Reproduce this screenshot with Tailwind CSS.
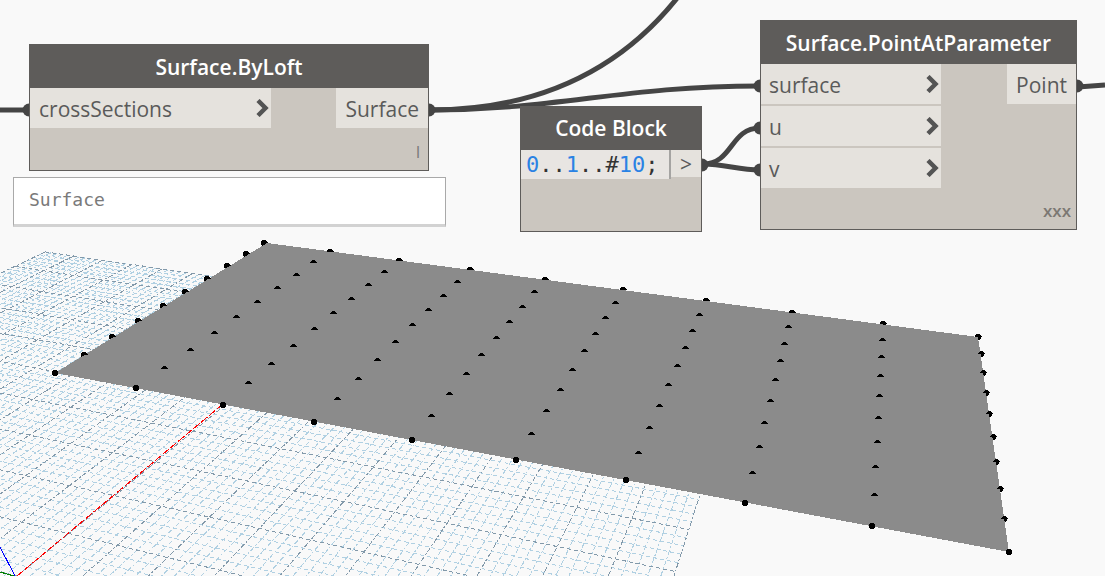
<!DOCTYPE html>
<html lang="en">
<head>
  <meta charset="UTF-8">
  <meta name="viewport" content="width=device-width, initial-scale=1.0" />
  <title>Surface.PointAtParameter</title>
  <script src="https://cdn.jsdelivr.net/npm/@tailwindcss/browser@4"></script>
</head>
<body class="relative min-h-screen overflow-hidden bg-[#f9f9f9] font-['Open_Sans',sans-serif] text-[#5a5a5a]">
  <!-- 3D preview -->
  <svg class="absolute inset-0 h-full w-full" aria-hidden="true">
    <g id="grid" fill="none" stroke-width="1" shape-rendering="crispEdges"></g>
    <g fill="none" stroke-width="1" shape-rendering="crispEdges">
      <path d="M17 576L223 404" stroke="#ff0000" stroke-dasharray="8 2" />
      <path d="M0 547L15 576" stroke="#0000ff" />
      <path d="M0 572L14 576" stroke="#008000" />
    </g>
    <g id="surface" shape-rendering="crispEdges"></g>
  </svg>

  <!-- Wires -->
  <svg class="absolute inset-0 h-full w-full" fill="none" stroke="#454545" stroke-width="5" aria-hidden="true">
    <path d="M0 110H28" />
    <path d="M430 110C540 110 620 70 678 -3" />
    <path d="M430 110C560 110 620 86 760 86" />
    <path d="M703 164C733 164 730 128 760 128" />
    <path d="M703 164C725 164 738 170 760 170" />
    <path d="M1078 87L1105 85" />
    <g fill="#454545" stroke="none">
      <circle cx="29" cy="110" r="6.5" />
      <circle cx="429" cy="110" r="6.5" />
      <circle cx="702" cy="165" r="6.5" />
      <circle cx="760" cy="86" r="6.5" />
      <circle cx="760" cy="128" r="6.5" />
      <circle cx="760" cy="170" r="6.5" />
      <circle cx="1077" cy="86" r="6.5" />
    </g>
  </svg>

  <!-- Surface.ByLoft -->
  <section class="absolute top-[44px] left-[29px] flex h-[127px] w-[400px] flex-col border border-[#5e5c5a] bg-[#cbc6bf]">
    <h2 class="flex h-[43px] shrink-0 items-center justify-center bg-[#5e5c5a] pt-0.5 text-[21px] font-semibold text-white">Surface.ByLoft</h2>
    <div class="flex justify-between text-[21px]">
      <button class="flex h-10 w-[241px] items-center justify-between bg-[#e5e2dd] pr-[2px] pl-[9px] pt-1">crossSections
        <svg class="-mt-1 h-[18px] w-[13px]" viewBox="0 0 13 18"><path d="M2 1.5L9.5 9L2 16.5" fill="none" stroke="#545454" stroke-width="4.5" /></svg>
      </button>
      <button class="flex h-10 items-center bg-[#e5e2dd] px-[9px] pt-1">Surface</button>
    </div>
    <p class="mt-auto pr-2 pb-1.5 text-right text-[16px] text-[#777]">l</p>
  </section>

  <input aria-label="Preview" readonly value="Surface" class="absolute top-[177px] left-[13px] h-[50px] w-[433px] border border-b-3 border-[#a9a9a9] border-b-[#d2d2d2] bg-white px-[15px] pb-1 font-['DejaVu_Sans_Mono',monospace] text-[18px] text-[#7a7a7a] outline-none" />

  <!-- Code Block -->
  <section class="absolute top-[106px] left-[520px] flex h-[126px] w-[182px] flex-col border border-[#5e5c5a] bg-[#cbc6bf]">
    <h2 class="flex h-[43px] shrink-0 items-center justify-center bg-[#5e5c5a] text-[21px] font-semibold text-white">Code Block</h2>
    <div class="flex items-start">
      <code class="h-[29px] grow border-r-2 border-[#a5a4a2] bg-[#e8e5e2] pl-[5px] font-['DejaVu_Sans_Mono',monospace] text-[22px] leading-[29px] text-[#333]"><span class="text-[#2a82e4]">0</span>..<span class="text-[#2a82e4]">1</span>..#<span class="text-[#2a82e4]">10</span>;</code>
      <button class="h-[27px] w-[30px] bg-[#e5e2dd] text-[21px] leading-[29px]">&gt;</button>
    </div>
  </section>

  <!-- Surface.PointAtParameter -->
  <section class="absolute top-[20px] left-[760px] flex h-[210px] w-[317px] flex-col border border-[#5e5c5a] bg-[#cbc6bf]">
    <h2 class="flex h-[43px] shrink-0 items-center justify-center bg-[#5e5c5a] pt-0.5 text-[21px] font-semibold text-white">Surface.PointAtParameter</h2>
    <div class="flex items-start justify-between text-[21px]">
      <div class="flex w-[180px] flex-col gap-[2px]">
        <button class="flex h-10 items-center justify-between bg-[#e5e2dd] pr-[2px] pl-2 pt-1">surface
          <svg class="-mt-1 h-[18px] w-[13px]" viewBox="0 0 13 18"><path d="M2 1.5L9.5 9L2 16.5" fill="none" stroke="#545454" stroke-width="4.5" /></svg>
        </button>
        <button class="flex h-10 items-center justify-between bg-[#e5e2dd] pr-[2px] pl-2 pt-1">u
          <svg class="-mt-1 h-[18px] w-[13px]" viewBox="0 0 13 18"><path d="M2 1.5L9.5 9L2 16.5" fill="none" stroke="#545454" stroke-width="4.5" /></svg>
        </button>
        <button class="flex h-10 items-center justify-between bg-[#e5e2dd] pr-[2px] pl-2 pt-1">v
          <svg class="-mt-1 h-[18px] w-[13px]" viewBox="0 0 13 18"><path d="M2 1.5L9.5 9L2 16.5" fill="none" stroke="#545454" stroke-width="4.5" /></svg>
        </button>
      </div>
      <button class="flex h-10 items-center bg-[#e5e2dd] px-[9px] pt-1">Point</button>
    </div>
    <p class="mt-auto pr-[5px] pb-1.5 text-right text-[17px] font-semibold text-[#7c7873]">xxx</p>
  </section>

  <script>
    // Perspective ground plane: each family of lines meets at a vanishing point
    const VA = [-2770, -156], VB = [908, -156], BASE = 576;

    // where the line VA-(a, BASE) crosses the line VB-(b, BASE)
    function cross(a, b) {
      const h = BASE - VA[1];
      const sa = (a - VA[0]) / h, sb = (b - VB[0]) / h;
      const d = (VB[0] - VA[0]) / (sa - sb);
      return [VA[0] + sa * d, VA[1] + d];
    }
    // plane coordinates in major cells, origin at the axes
    const at = (x, y) => cross(17 + y * 226.5, 17 + x * 65.7);

    const grid = document.getElementById('grid');
    const line = (p, q, color, dash) => {
      grid.insertAdjacentHTML('beforeend', `<path d="M${p.join(' ')}L${q.join(' ')}" stroke="${color}" stroke-dasharray="${dash}"/>`);
    };
    const draw = (i, color) => {
      const k = i / 5;
      line(at(-10, k), at(10, k), color, '4 3');
      line(at(k, 10), at(k, -2), color, '5 2 2 2');
    };
    for (let i = -50; i <= 50; i++) if (i % 5) draw(i, '#b0d0e2');
    for (let i = -50; i <= 50; i += 5) draw(i, '#8299aa');

    // 10 x 10 points on the loft
    const A = [55, 373], B = [267, 243], C = [978, 337], D = [1009, 552];
    const base = (v, p) => v[0] + (p[0] - v[0]) * (BASE - v[1]) / (p[1] - v[1]);
    const a0 = base(VA, D), a1 = base(VA, C), b0 = base(VB, A), b1 = base(VB, D);
    const surface = document.getElementById('surface');
    let back = '', front = '';
    for (let u = 0; u < 10; u++) {
      for (let v = 0; v < 10; v++) {
        const [x, y] = cross(a0 + (a1 - a0) * v / 9, b0 + (b1 - b0) * u / 9).map(Math.round);
        if (v === 0 || v === 9 || u === 0 || u === 9) back += `<circle cx="${x}" cy="${y}" r="3"/>`;
        front += v === 0
          ? `<circle cx="${x}" cy="${y}" r="3"/>`
          : `<path d="M${x - 3} ${y}v-1h1v-1h1v-1h3v1h1v1h1v1z"/>`;
      }
    }
    surface.innerHTML = back + `<path d="M${A}L${B}L${C}L${D}Z" fill="#8b8b8b"/>` + front;
  </script>
</body>
</html>
